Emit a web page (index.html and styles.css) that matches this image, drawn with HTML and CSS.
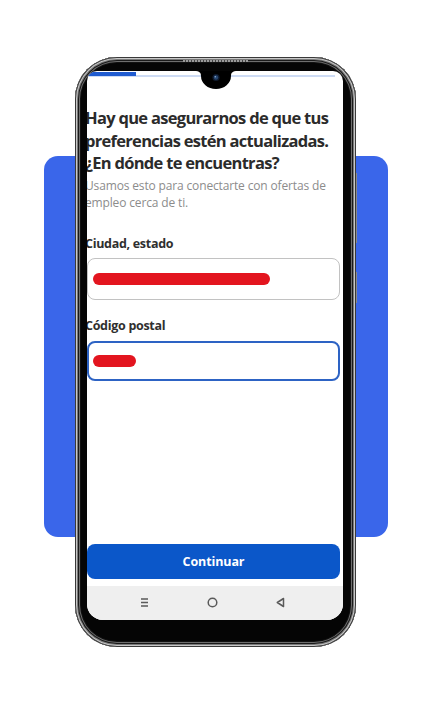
FILE: index.html
```html
<!DOCTYPE html>
<html lang="es">
<head>
<meta charset="utf-8">
<title>Ubicación</title>
<link rel="stylesheet" href="styles.css">
</head>
<body>
<div class="stage">
  <div class="backdrop"></div>
  <div class="phone">
    <div class="speaker"></div>
    <div class="side-btn side-btn-a"></div>
    <div class="side-btn side-btn-b"></div>
    <svg class="notch" width="44" height="18" viewBox="0 0 44 18">
      <path d="M0,0 H44 C38,0 37,2 37,5 A15,13 0 0 1 7,5 C7,2 6,0 0,0 Z" fill="#000"/>
      <circle cx="22" cy="6.5" r="3.6" fill="#0f1a2e"/>
      <circle cx="22" cy="6.5" r="2.2" fill="#27466f"/>
      <circle cx="21.3" cy="5.8" r="0.7" fill="#8fb1dd"/>
    </svg>
    <div class="screen">
      <div class="progress"><div class="progress-fill"></div></div>
      <div class="content">
        <h1 class="title">Hay que asegurarnos de que tus preferencias estén actualizadas. ¿En dónde te encuentras?</h1>
        <p class="subtitle">Usamos esto para conectarte con ofertas de empleo cerca de ti.</p>
        <label class="field-label label-city">Ciudad, estado</label>
        <div class="input input-city"><span class="redact redact-long"></span></div>
        <label class="field-label label-zip">Código postal</label>
        <div class="input input-zip"><span class="redact redact-short"></span></div>
        <div class="spacer"></div>
        <button class="cta">Continuar</button>
      </div>
      <div class="navbar">
        <svg class="nav-icon" width="11" height="11" viewBox="0 0 11 11"><path d="M2 2H9M2 5.5H9M2 9H9" stroke="#5a5a5a" stroke-width="1.5" fill="none"/></svg>
        <svg class="nav-icon" width="11" height="11" viewBox="0 0 11 11"><circle cx="5.5" cy="5.5" r="4.3" stroke="#5a5a5a" stroke-width="1.5" fill="none"/></svg>
        <svg class="nav-icon" width="11" height="11" viewBox="0 0 11 11"><path d="M8.5 1.5 L2.3 5.5 L8.5 9.5 Z" stroke="#5a5a5a" stroke-width="1.5" stroke-linejoin="round" fill="none"/></svg>
      </div>
    </div>
  </div>
</div>
</body>
</html>
```
FILE: styles.css
```css
* { box-sizing: border-box; }
html, body { margin: 0; padding: 0; background: #ffffff; }
body { font-family: "Open Sans", "Noto Sans", sans-serif; }

.stage {
  position: relative;
  width: 434px;
  height: 704px;
  padding-top: 57px;
  padding-left: 75px;
  overflow: hidden;
}

.backdrop {
  position: absolute;
  left: 44px;
  top: 156px;
  width: 344px;
  height: 381px;
  border-radius: 14px;
  background: #3a66ea;
}

.phone {
  position: relative;
  width: 281px;
  height: 590px;
  padding: 14px 13px 26px 12px;
  border-radius: 42px;
  background: #050505;
  box-shadow:
    inset 0 0 0 1px #3a3a3a,
    inset 0 0 0 2px #c8c8c8,
    inset 0 0 0 3px #7a7a7a,
    inset 0 0 0 4px #1a1a1a,
    inset 0 0 0 5px #6e6e6e,
    inset 0 0 0 6px #111;
}

.speaker {
  position: absolute;
  top: 3px;
  left: 108px;
  width: 65px;
  height: 2px;
  background: repeating-linear-gradient(90deg, #9a9a9a 0 2px, #444 2px 3px);
}

.side-btn {
  position: absolute;
  right: -1px;
  width: 1px;
  background: #888;
}
.side-btn-a { top: 116px; height: 70px; }
.side-btn-b { top: 215px; height: 31px; }

.notch {
  position: absolute;
  top: 14px;
  left: 119px;
  z-index: 2;
}

.screen {
  position: relative;
  width: 256px;
  height: 549px;
  background: #ffffff;
  border-radius: 10px 10px 16px 16px;
  overflow: hidden;
  display: flex;
  flex-direction: column;
}

.progress {
  height: 6px;
  margin-right: 8px;
  border-bottom: 2px solid #cddbf4;
  display: flex;
  align-items: flex-end;
}
.progress-fill {
  width: 49px;
  height: 4px;
  background: #1f5bd0;
  margin-bottom: -1px;
}

.content {
  flex: 1;
  display: flex;
  flex-direction: column;
  padding-right: 3px;
}

.title {
  margin: 30px 0 0 -2px;
  font-size: 16.5px;
  line-height: 22.5px;
  font-weight: 700;
  letter-spacing: -0.7px;
  color: #2b2b2b;
}

.subtitle {
  margin: 2px 0 0 -2px;
  font-size: 12px;
  line-height: 17px;
  color: #8c8c8c;
  letter-spacing: -0.15px;
}

.field-label {
  display: block;
  margin-left: -2px;
  font-size: 12.5px;
  line-height: 16px;
  font-weight: 700;
  letter-spacing: -0.3px;
  color: #2f2f2f;
}
.label-city { margin-top: 25px; }
.label-zip { margin-top: 18px; }

.input {
  display: flex;
  align-items: center;
  padding-left: 5px;
  border-radius: 8px;
  background: #fff;
}
.input-city {
  margin-top: 6px;
  height: 42px;
  border: 1px solid #c2c2c2;
}
.input-zip {
  margin-top: 7px;
  height: 40px;
  border: 2px solid #2d63c4;
  padding-left: 4px;
}

.redact {
  display: block;
  height: 12px;
  border-radius: 6px;
  background: #e3151f;
}
.redact-long { width: 177px; }
.redact-short { width: 43px; height: 12px; }

.spacer { flex: 1; }

.cta {
  height: 35px;
  margin: 0 0 7px 0;
  border: none;
  border-radius: 8px;
  background: #0b57c9;
  color: #ffffff;
  font-family: "Open Sans", "Noto Sans", sans-serif;
  font-size: 12.5px;
  font-weight: 700;
  letter-spacing: -0.1px;
}

.navbar {
  height: 34px;
  background: #efefef;
  display: flex;
  align-items: center;
  justify-content: center;
  gap: 57px;
  padding-right: 6px;
  padding-bottom: 1px;
}
.nav-icon { display: block; }
```
